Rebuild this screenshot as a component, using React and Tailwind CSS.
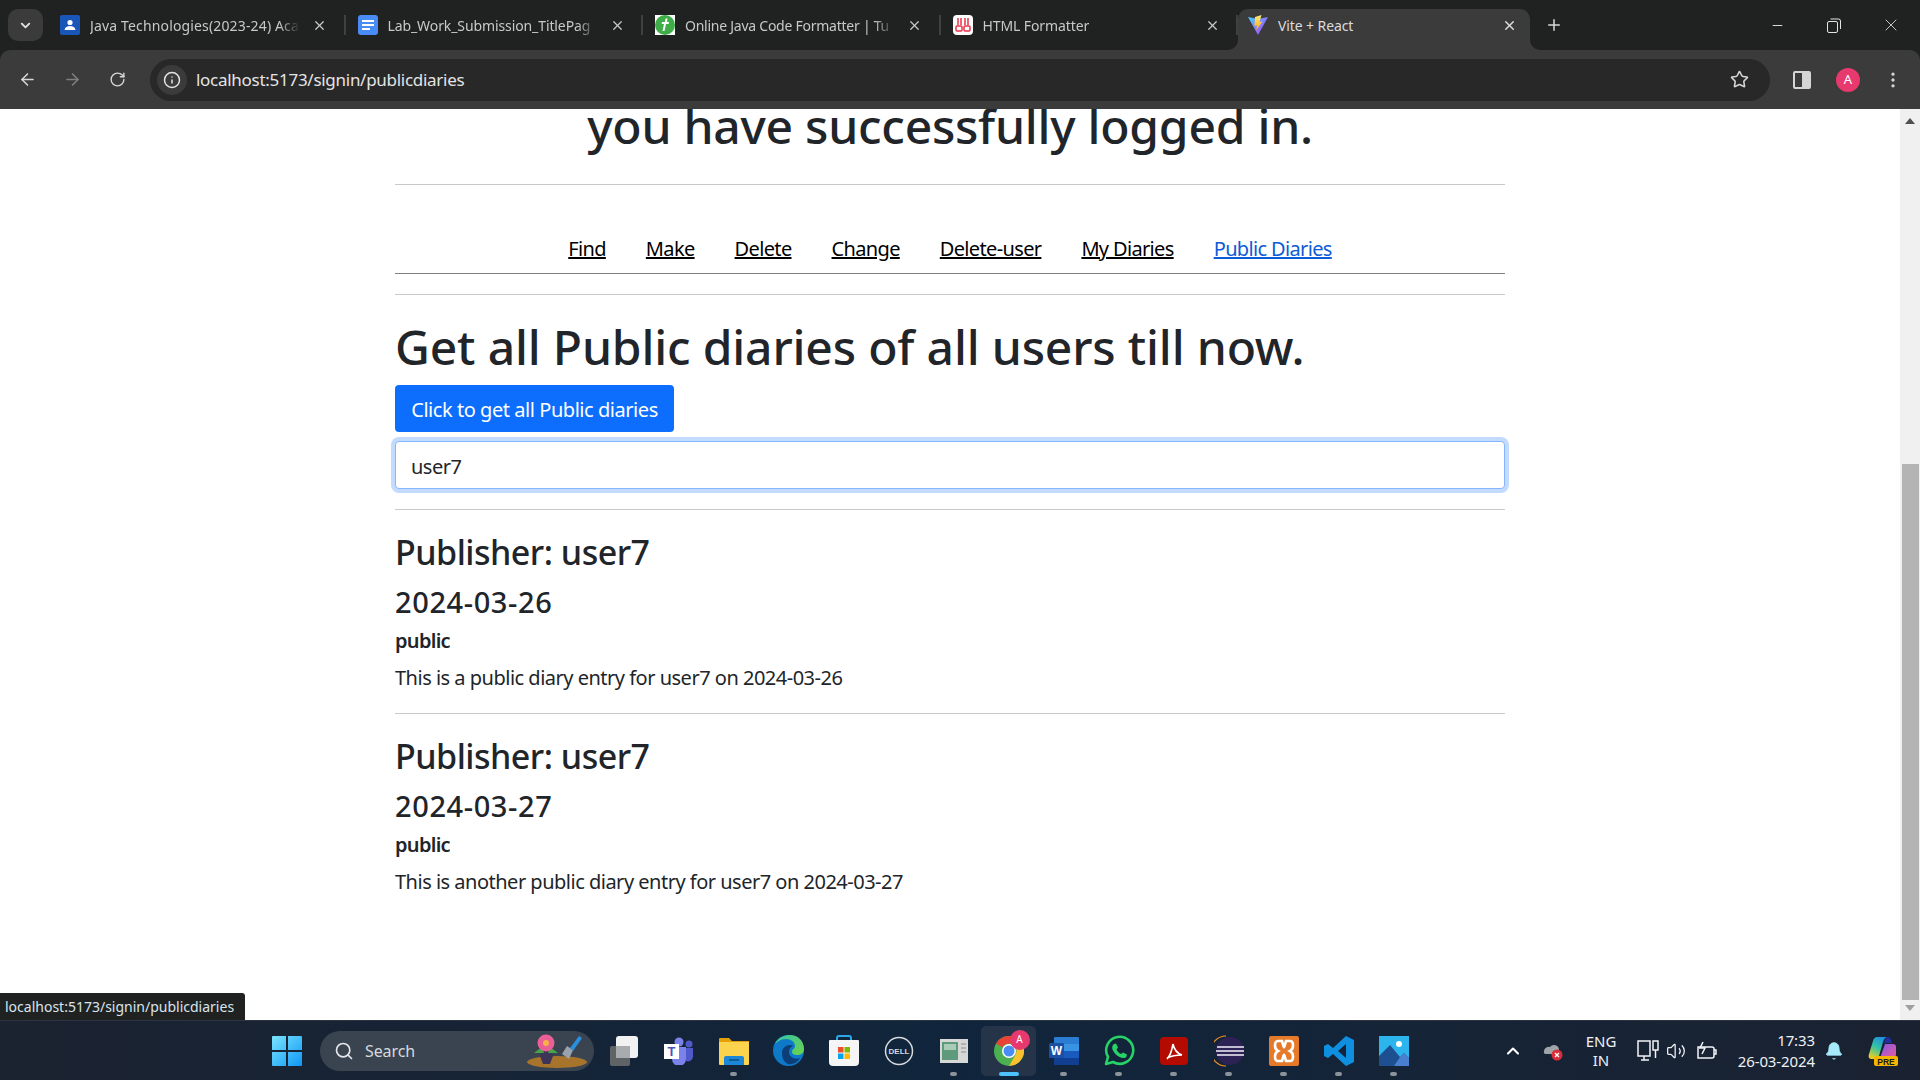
import { ArrowLeft, ArrowRight, RotateCw, Info, Star, X, Plus, Minus, ChevronDown, ChevronUp, EllipsisVertical, Search, Bell, Volume2 } from 'lucide-react';

const uiFont = 'font-["Noto_Sans",sans-serif]';
const navLinks = ['Find', 'Make', 'Delete', 'Change', 'Delete-user', 'My Diaries'];

const tabs = [
  { title: 'Java Technologies(2023-24) Aca', icon: <ClassroomIcon />, spacing: 'tracking-[0.15px]' },
  { title: 'Lab_Work_Submission_TitlePag', icon: <DocsIcon />, spacing: 'tracking-[-0.1px]' },
  { title: 'Online Java Code Formatter | Tu', icon: <TutorialsIcon />, spacing: 'tracking-[-0.25px]' },
  { title: 'HTML Formatter', icon: <HtmlIcon />, spacing: 'tracking-[-0.1px]' },
];

function ClassroomIcon() {
  return (
    <svg width="20" height="20" viewBox="0 0 20 20">
      <rect width="20" height="20" rx="2" fill="#1a56b8" />
      <circle cx="10" cy="7.5" r="2.6" fill="#fff" />
      <path d="M4.5 15c.6-3 2.6-4 5.5-4s4.900 1 5.500 4z" fill="#fff" />
    </svg>
  );
}

function DocsIcon() {
  return (
    <svg width="20" height="20" viewBox="0 0 20 20">
      <rect width="20" height="20" rx="3" fill="#4a8cf5" />
      <path d="M4 5h12v2H4zM4 9h12v2H4zM4 13h8v2H4z" fill="#fff" />
    </svg>
  );
}

function TutorialsIcon() {
  return (
    <svg width="20" height="20" viewBox="0 0 20 20">
      <rect width="20" height="20" fill="#fff" />
      <circle cx="10" cy="10" r="10" fill="#3fae49" />
      <path d="M7 7h7l-.4 2H11l-1.500 7H7.500L9 9H6.600zM10.500 3.500h2L12 7h-2z" fill="#fff" />
    </svg>
  );
}

function HtmlIcon() {
  return (
    <svg width="20" height="20" viewBox="0 0 20 20">
      <rect width="20" height="20" rx="4" fill="#fff" />
      <path d="M5 3v7M8 3v7M12 3v7M15 3v7" stroke="#e8344a" strokeWidth="1.500" />
      <rect x="3" y="11" width="6" height="5" rx="1" fill="none" stroke="#e8344a" strokeWidth="1.500" />
      <rect x="11" y="11" width="6" height="5" rx="1" fill="none" stroke="#e8344a" strokeWidth="1.500" />
    </svg>
  );
}

function ViteIcon() {
  return (
    <svg width="22" height="22" viewBox="0 0 22 22">
      <defs>
        <linearGradient id="vite-a" x1="0" y1="0" x2="1" y2="1">
          <stop offset="0" stopColor="#41d1ff" />
          <stop offset="1" stopColor="#bd34fe" />
        </linearGradient>
        <linearGradient id="vite-b" x1="0" y1="0" x2="0" y2="1">
          <stop offset="0" stopColor="#ffea83" />
          <stop offset="1" stopColor="#ffa800" />
        </linearGradient>
      </defs>
      <path d="M1 3l10 2 10-2-10 18z" fill="url(#vite-a)" />
      <path d="M14.500 1L8 3l-.5 9 2.500-.5-.8 5 6.300-9-3 .5z" fill="url(#vite-b)" />
    </svg>
  );
}

function Tab({ title, icon, spacing }) {
  return (
    <div className="relative flex h-[32px] w-[297.5px] shrink-0 items-center pl-[12px]">
      <span className="shrink-0">{icon}</span>
      <span className={`ml-[10px] w-[210px] overflow-hidden text-[14px] whitespace-nowrap text-[#c7c8c9] ${spacing} [mask-image:linear-gradient(to_right,black_90%,transparent)]`}>{title}</span>
      <X size={15} strokeWidth={2} className="absolute left-[264px] text-[#c7c8c9]" />
      <span className="absolute right-[0px] h-[20px] w-[2px] bg-[#3f4040]" />
    </div>
  );
}

function BrowserChrome() {
  return (
    <div className={`${uiFont} shrink-0 bg-[#202221]`}>
      <div className="flex h-[50px] items-start pl-[8px]">
        <div className="mt-[9px] flex h-[32px] w-[35px] shrink-0 items-center justify-center rounded-[10px] bg-[#3b3b3b]">
          <ChevronDown size={15} strokeWidth={3} className="text-[#e3e3e3]" />
        </div>
        <div className="ml-[5px] flex h-full items-start pt-[9px]">
          {tabs.map((t) => (
            <Tab key={t.title} title={t.title} icon={t.icon} spacing={t.spacing} />
          ))}
          <div className="relative flex h-[41px] w-[292px] shrink-0 items-start rounded-t-[10px] bg-[#3b3b3b] pl-[9px]">
            <span className="mt-[5px]"><ViteIcon /></span>
            <span className="ml-[9px] mt-[6px] text-[14px] text-[#dcdcdc] tracking-[-0.1px]">Vite + React</span>
            <X size={15} strokeWidth={2.500} className="absolute right-[13px] top-[9px] text-[#d8d8d8]" />
            <span className="absolute -left-[10px] bottom-0 h-[10px] w-[10px] bg-[#3b3b3b]">
              <span className="block h-full w-full rounded-br-[10px] bg-[#202221]" />
            </span>
            <span className="absolute -right-[10px] bottom-0 h-[10px] w-[10px] bg-[#3b3b3b]">
              <span className="block h-full w-full rounded-bl-[10px] bg-[#202221]" />
            </span>
          </div>
          <div className="flex h-[32px] w-[48px] items-center justify-center">
            <Plus size={18} strokeWidth={2} className="text-[#d8d8d8]" />
          </div>
        </div>
        <div className="ml-auto mt-[12px] flex items-center text-[#e4e4e4]">
          <div className="flex h-[26px] w-[55px] items-center justify-center"><Minus size={15} strokeWidth={1.500} /></div>
          <div className="flex h-[26px] w-[57px] items-center justify-center">
            <svg width="14" height="15" viewBox="0 0 14 15" fill="none" stroke="currentColor">
              <rect x="0.500" y="3.500" width="10" height="11" rx="1.500" />
              <path d="M3.500 1h8a2 2 0 0 1 2 2v8" />
            </svg>
          </div>
          <div className="flex h-[26px] w-[58px] items-center justify-center"><X size={20} strokeWidth={1} /></div>
        </div>
      </div>
      <div className="flex h-[59px] items-center rounded-t-[10px] bg-[#3b3b3b] pl-[18px] pr-[11px]">
        <ArrowLeft size={19} strokeWidth={2} className="text-[#d6d6d6]" />
        <ArrowRight size={19} strokeWidth={2} className="ml-[26px] text-[#7f7f7f]" />
        <RotateCw size={17} strokeWidth={2} className="ml-[27px] text-[#d6d6d6]" />
        <div className="ml-[24px] flex h-[42px] w-[1620px] items-center rounded-full bg-[#282828] pl-[7px]">
          <span className="flex h-[30px] w-[30px] items-center justify-center rounded-full bg-[#3b3b3b]">
            <Info size={18} strokeWidth={2} className="text-[#e4e4e4]" />
          </span>
          <span className="ml-[9px] text-[17px] text-[#e4e4e4] tracking-[-0.28px]">localhost:5173/signin/publicdiaries</span>
          <Star size={19} strokeWidth={2} className="ml-auto mr-[21px] text-[#d6d6d6]" />
        </div>
        <span className="ml-[23px] flex h-[18px] w-[18px] overflow-hidden rounded-[2px] border-2 border-[#d6d6d6]">
          <span className="w-1/2" />
          <span className="w-1/2 bg-[#d6d6d6]" />
        </span>
        <span className="ml-[25px] flex h-[24px] w-[24px] items-center justify-center rounded-full bg-[#e8396f] text-[13px] text-white">A</span>
        <EllipsisVertical size={20} strokeWidth={2} className="ml-[23px] text-[#d6d6d6]" />
      </div>
    </div>
  );
}

function Entry({ date, text }) {
  return (
    <div>
      <h2 className="mt-[21px] text-[34px] leading-[43px] font-medium text-[#212529] tracking-[-0.5px]">Publisher: user7</h2>
      <h3 className="mt-[10px] text-[29px] leading-[36px] font-medium text-[#212529] tracking-[0.6px]">{date}</h3>
      <p className="mt-[6px] text-[20px] leading-[30px] font-semibold text-[#212529] tracking-[-0.7px]">public</p>
      <p className="mt-[7px] text-[20px] leading-[30px] text-[#212529] tracking-[-0.5px]">{text}</p>
    </div>
  );
}

function Page() {
  return (
    <main className={`${uiFont} relative flex min-h-0 flex-1 overflow-hidden bg-white`}>
      <div className="min-w-0 flex-1">
        <div className="mx-auto w-[1110px]">
          <h1 className="-mt-[12px] text-center text-[48px] leading-[58px] font-medium text-[#212529] tracking-[-0.25px]">you have successfully logged in.</h1>
          <hr className="mt-[29px] border-[#c8c9ca]" />
          <nav className="mt-[49px] flex justify-center gap-[40px] border-b border-[#808080] pb-[9px] text-[20px] leading-[30px] tracking-[-0.65px]">
            {navLinks.map((l) => (
              <a key={l} href="#" className="text-black underline">{l}</a>
            ))}
            <a href="#" className="text-[#0d5bd7] underline">Public Diaries</a>
          </nav>
          <hr className="mt-[20px] border-[#c8c9ca]" />
          <h1 className="mt-[23px] text-[48px] leading-[58px] font-medium text-[#212529] tracking-[-0.17px]">Get all Public diaries of all users till now.</h1>
          <button type="button" className="mt-[9px] block h-[47px] w-[279px] rounded-[4px] bg-[#0d6efd] pt-[2px] text-center text-[20px] text-white tracking-[-0.45px]">Click to get all Public diaries</button>
          <input
            readOnly
            value="user7"
            className="mt-[9px] block h-[48px] w-full rounded-[4px] border border-[#86b7fe] bg-white px-[15px] pt-[2px] text-[20px] text-[#212529] tracking-[-0.5px] shadow-[0_0_0_4px_#c2dbfe] outline-none"
          />
          <hr className="mt-[20px] border-[#c8c9ca]" />
          <Entry date="2024-03-26" text="This is a public diary entry for user7 on 2024-03-26" />
          <hr className="mt-[20px] border-[#c8c9ca]" />
          <Entry date="2024-03-27" text="This is another public diary entry for user7 on 2024-03-27" />
        </div>
      </div>
      <div className="flex w-[20px] shrink-0 flex-col items-center bg-[#f0f0f0]">
        <span className="mt-[9px] h-0 w-0 border-x-[5px] border-b-[6px] border-x-transparent border-b-[#505050]" />
        <span className="mt-[340px] h-[536px] w-[17px] bg-[#b4b4b4]" />
        <span className="mt-[5px] h-0 w-0 border-x-[5px] border-t-[6px] border-x-transparent border-t-[#a0a0a0]" />
      </div>
      <div className="absolute bottom-0 left-0 flex h-[27px] w-[245px] items-center rounded-tr-[3px] bg-[#202221] pl-[5px] text-[14px] text-[#d8e4ee]">localhost:5173/signin/publicdiaries</div>
    </main>
  );
}

function WinLogo() {
  return (
    <svg width="30" height="30" viewBox="0 0 30 30">
      <defs>
        <linearGradient id="win" x1="0" y1="0" x2="1" y2="1">
          <stop offset="0" stopColor="#7ae4ff" />
          <stop offset="1" stopColor="#0f96f5" />
        </linearGradient>
      </defs>
      <path d="M0 1a1 1 0 0 1 1-1h13v14H0zM16 0h13a1 1 0 0 1 1 1v13H16zM0 16h14v14H1a1 1 0 0 1-1-1zM16 16h14v13a1 1 0 0 1-1 1H16z" fill="url(#win)" />
    </svg>
  );
}

function SearchArt() {
  return (
    <svg width="62" height="36" viewBox="0 0 62 36">
      <ellipse cx="31" cy="29" rx="30" ry="6" fill="#a8742c" />
      <path d="M16 16h9l2 7-3 8h-7l-3-8z" fill="#3d3457" />
      <path d="M8 20l8-6 2 6zM32 20l-8-6-2 6z" fill="#4aa446" />
      <circle cx="20" cy="10" r="8.500" fill="#ea5f95" />
      <circle cx="20" cy="10" r="3" fill="#f7b04a" />
      <path d="M36 21l5-8 6 4-4 9z" fill="#9aa3ac" />
      <path d="M44 15l9-12 3 2-9 13z" fill="#2b8fe0" />
    </svg>
  );
}

const TaskView = () => (
  <svg width="32" height="32" viewBox="0 0 32 32">
    <rect x="2" y="11" width="20" height="20" rx="2" fill="#5f6366" />
    <rect x="8" y="1" width="22" height="22" rx="3" fill="#f2f2f2" />
    <rect x="8" y="11" width="14" height="12" fill="#a9acae" />
  </svg>
);

const Teams = () => (
  <svg width="30" height="28" viewBox="0 0 30 28">
    <circle cx="15" cy="5" r="4.500" fill="#7b83eb" />
    <circle cx="25" cy="7" r="3.500" fill="#5059c9" />
    <path d="M19 11h10v9a5 5 0 0 1-7 4z" fill="#5059c9" />
    <path d="M8 10h14v12a7 7 0 0 1-14 0z" fill="#7b83eb" />
    <rect x="0" y="7" width="15" height="15" fill="#fff" />
    <text x="7.500" y="19" textAnchor="middle" fontSize="13" fontWeight="700" fontFamily="Liberation Sans, sans-serif" fill="#4b53bc">T</text>
  </svg>
);

const Folder = () => (
  <svg width="30" height="28" viewBox="0 0 30 28">
    <path d="M0 2a1 1 0 0 1 1-1h9l3 3h17v4H0z" fill="#e3a008" />
    <path d="M0 5h30v22a1 1 0 0 1-1 1H1a1 1 0 0 1-1-1z" fill="#fcd34d" />
    <path d="M5 28v-7a2 2 0 0 1 2-2h16a2 2 0 0 1 2 2v7z" fill="#1b87d6" />
    <path d="M10 23h10" stroke="#0b4f8a" strokeWidth="1.500" />
  </svg>
);

const Edge = () => (
  <svg width="31" height="31" viewBox="0 0 31 31">
    <defs>
      <linearGradient id="edge" x1="0" y1="0" x2="1" y2="1">
        <stop offset="0" stopColor="#2fc5a6" />
        <stop offset="1" stopColor="#6ed34a" />
      </linearGradient>
    </defs>
    <circle cx="15.500" cy="15.500" r="15.500" fill="#0e78c9" />
    <path d="M2 9C5 2 12 0 17 0c8 0 14 6 14 14 0 4-3 6-7 6-3 0-5-1-5-3 0-3 3-3 3-6 0-4-4-7-9-7-5 0-9 3-11 5z" fill="url(#edge)" />
    <path d="M9 18c0-5 4-8 8-8 2 0 3 1 3 1-3 1-4 3-4 6 0 5 5 8 11 6-3 5-8 7-12 6-4-2-6-6-6-11z" fill="#0c3f78" />
  </svg>
);

const Store = () => (
  <svg width="30" height="31" viewBox="0 0 30 31">
    <path d="M8 6V3a2 2 0 0 1 2-2h10a2 2 0 0 1 2 2v3" fill="none" stroke="#2aa7e8" strokeWidth="2" />
    <path d="M1 5h28a1 1 0 0 1 1 1v21a4 4 0 0 1-4 4H4a4 4 0 0 1-4-4V6a1 1 0 0 1 1-1z" fill="#f5f5f5" />
    <rect x="9" y="12" width="5.500" height="5.500" fill="#ea4f2a" />
    <rect x="15.500" y="12" width="5.500" height="5.500" fill="#7fba00" />
    <rect x="9" y="18.500" width="5.500" height="5.500" fill="#00a4ef" />
    <rect x="15.500" y="18.500" width="5.500" height="5.500" fill="#ffb900" />
  </svg>
);

const Dell = () => (
  <svg width="30" height="30" viewBox="0 0 30 30">
    <circle cx="15" cy="15" r="13.500" fill="none" stroke="#d7d9db" strokeWidth="1.500" />
    <text x="15" y="18" textAnchor="middle" fontSize="8" fontWeight="700" fontFamily="Liberation Sans, sans-serif" fill="#d7d9db">DELL</text>
  </svg>
);

const ScreenApp = () => (
  <svg width="28" height="24" viewBox="0 0 28 24">
    <rect width="28" height="24" fill="#d6d8d8" />
    <rect x="2" y="3" width="16" height="18" fill="#5f9a7d" />
    <rect x="4" y="5" width="12" height="6" fill="#a9cbb8" />
    <path d="M21 5h5M21 9h5M21 13h5" stroke="#8a8d8f" />
  </svg>
);

const Chrome = () => (
  <span className="relative block h-[30px] w-[30px]">
    <svg width="30" height="30" viewBox="0 0 30 30">
      <circle cx="15" cy="15" r="15" fill="#4caf50" />
      <path d="M15 0a15 15 0 0 1 13 7.500H15a7.500 7.500 0 0 0-6.500 3.750L2 7.500A15 15 0 0 1 15 0z" fill="#ea4335" />
      <path d="M28 7.500A15 15 0 0 1 15 30l6.500-11.250a7.500 7.500 0 0 0 0-7.500z" fill="#fbc02d" />
      <circle cx="15" cy="15" r="7" fill="#fff" />
      <circle cx="15" cy="15" r="5.500" fill="#4a8cf5" />
    </svg>
    <span className="absolute -top-[6px] -right-[6px] flex h-[20px] w-[20px] items-center justify-center rounded-full bg-[#e8396f] text-[10px] text-white">A</span>
  </span>
);

const Word = () => (
  <svg width="30" height="28" viewBox="0 0 30 28">
    <rect x="5" y="0" width="25" height="28" rx="1" fill="#2b7cd3" />
    <rect x="5" y="7" width="25" height="7" fill="#41a5ee" opacity="0.600" />
    <rect x="5" y="14" width="25" height="7" fill="#185abd" />
    <rect x="5" y="21" width="25" height="7" fill="#103f91" />
    <rect x="0" y="6" width="15" height="15" rx="1" fill="#1a4fa3" />
    <text x="7.500" y="18" textAnchor="middle" fontSize="12" fontWeight="700" fontFamily="Liberation Sans, sans-serif" fill="#fff">W</text>
  </svg>
);

const Whatsapp = () => (
  <svg width="32" height="32" viewBox="0 0 32 32">
    <path d="M3 29l2-7A13.500 13.500 0 1 1 10 27z" fill="none" stroke="#27d366" strokeWidth="2.600" strokeLinejoin="round" />
    <path d="M11 9l2-.5 2 4-1.500 2c1 2 2.500 3.500 4.500 4.500l2-1.500 4 2-.5 2c-1 2-4 2-7 .5s-5-3.500-6.500-6.500-.5-5.500 1-6.500z" fill="#27d366" />
  </svg>
);

const Acrobat = () => (
  <svg width="28" height="28" viewBox="0 0 28 28">
    <rect width="28" height="28" rx="4" fill="#b30b00" />
    <path d="M7 22c3-3 5-9 6-15M13 7c1 5 3 9 9 11M7 21c4-2 9-3 15-3" fill="none" stroke="#fff" strokeWidth="1.600" />
  </svg>
);

const Eclipse = () => (
  <svg width="30" height="32" viewBox="0 0 30 32">
    <circle cx="16" cy="16" r="14" fill="#2c2255" />
    <path d="M3 12h27M2 16h28M3 20h27" stroke="#f2f0f8" strokeWidth="1.600" />
    <path d="M12 1a15 15 0 0 0 0 30" fill="none" stroke="#f7941e" strokeWidth="1.200" />
  </svg>
);

const Xampp = () => (
  <svg width="30" height="30" viewBox="0 0 30 30">
    <rect width="30" height="30" rx="2" fill="#e57b2a" />
    <path d="M9 5h4c1 3 1 5 2 6 1-1 1-3 2-6h4c4 0 4 8 0 10 4 2 4 10 0 10h-4c-1-3-1-5-2-6-1 1-1 3-2 6H9c-4 0-4-8 0-10-4-2-4-10 0-10z" fill="none" stroke="#fff" strokeWidth="2.600" />
  </svg>
);

const VsCode = () => (
  <svg width="30" height="30" viewBox="0 0 30 30">
    <path d="M22 0l8 4v22l-8 4-13-12-5 4-4-2V10l4-2 5 4zM22 8l-8 7 8 7z" fill="#0f8fe0" fillRule="evenodd" />
  </svg>
);

const Photos = () => (
  <svg width="30" height="30" viewBox="0 0 30 30">
    <rect width="30" height="30" fill="#2bb5ec" />
    <circle cx="20" cy="8" r="3" fill="#fff" />
    <path d="M0 20L11 9l10 12 4-4 5 5v8H0z" fill="#1d4f91" />
    <path d="M21 21l4-4 5 5v8H15z" fill="#4a7fd0" />
  </svg>
);

const Copilot = () => (
  <svg width="30" height="30" viewBox="0 0 30 30">
    <defs>
      <linearGradient id="cop-l" x1="0.700" y1="0" x2="0.200" y2="1">
        <stop offset="0" stopColor="#1f8ee8" />
        <stop offset="0.500" stopColor="#35c4a0" />
        <stop offset="1" stopColor="#f0d020" />
      </linearGradient>
      <linearGradient id="cop-r" x1="0" y1="0" x2="1" y2="1">
        <stop offset="0" stopColor="#7a5ae8" />
        <stop offset="1" stopColor="#f05a9c" />
      </linearGradient>
    </defs>
    <path d="M9 1h11c-3 0-4 2-5 5l-4 14c-.5 2-2 3-4 3H4c-3 0-4-2-3-5L5 5c1-3 2-4 4-4z" fill="url(#cop-l)" />
    <path d="M20 1c2 0 3 2 4 6h-8c1-4 2-6 4-6z" fill="#2030a0" />
    <path d="M17 8h8c2 0 3 1 3 3v7c0 2-1 4-3 4H12z" fill="url(#cop-r)" />
    <rect x="6" y="20" width="24" height="10" rx="2" fill="#f7b500" />
    <text x="18" y="28.500" textAnchor="middle" fontSize="8.500" fontWeight="700" fontFamily="Liberation Sans, sans-serif" fill="#1a1a1a">PRE</text>
  </svg>
);

const appIcons = [
  { key: 'task', icon: <TaskView /> },
  { key: 'teams', icon: <Teams /> },
  { key: 'folder', icon: <Folder />, dot: true },
  { key: 'edge', icon: <Edge /> },
  { key: 'store', icon: <Store /> },
  { key: 'dell', icon: <Dell /> },
  { key: 'screen', icon: <ScreenApp />, dot: true },
  { key: 'chrome', icon: <Chrome />, active: true },
  { key: 'word', icon: <Word />, dot: true },
  { key: 'whatsapp', icon: <Whatsapp />, dot: true },
  { key: 'acrobat', icon: <Acrobat />, dot: true },
  { key: 'eclipse', icon: <Eclipse />, dot: true },
  { key: 'xampp', icon: <Xampp />, dot: true },
  { key: 'vscode', icon: <VsCode />, dot: true },
  { key: 'photos', icon: <Photos />, dot: true },
];

function Taskbar() {
  return (
    <footer className={`${uiFont} flex h-[60px] shrink-0 items-center border-t border-[#2c3440] bg-gradient-to-r from-[#1b2230] via-[#10253c] to-[#1a2231] text-[#eef1f4]`}>
      <div className="ml-[272px] flex w-[30px] justify-center"><WinLogo /></div>
      <div className="ml-[18px] flex h-[40px] w-[274px] items-center rounded-full bg-[#3a4451] pl-[14px] pr-[6px]">
        <Search size={20} strokeWidth={2} className="text-[#e4e6e8]" />
        <span className="ml-[11px] text-[16px] text-[#d6d9dc] tracking-[-0.1px]">Search</span>
        <span className="ml-auto"><SearchArt /></span>
      </div>
      <div className="ml-[2px] flex items-center">
        {appIcons.map((a) => (
          <div key={a.key} className={`relative flex h-[50px] w-[55px] items-center justify-center rounded-[5px] ${a.active ? 'bg-[#26344a]' : ''}`}>
            {a.icon}
            {a.dot && <span className="absolute bottom-0 h-[4px] w-[7px] rounded-full bg-[#8b929a]" />}
            {a.active && <span className="absolute bottom-0 h-[4px] w-[20px] rounded-full bg-[#4cc2ff]" />}
          </div>
        ))}
      </div>
      <ChevronUp size={20} strokeWidth={2.500} className="ml-[82px] text-white" />
      <svg width="22" height="20" viewBox="0 0 22 20" className="ml-[19px]">
        <path d="M2 12a5 5 0 0 1 6-6 5 5 0 0 1 9 3v4H3z" fill="#9fa4a9" />
        <circle cx="15" cy="14" r="5.500" fill="#d92d3a" />
        <path d="M13 12l4 4M17 12l-4 4" stroke="#fff" strokeWidth="1.300" />
      </svg>
      <div className="ml-[18px] w-[38px] text-center text-[15px] leading-[19px]">ENG<br />IN</div>
      <svg width="24" height="24" viewBox="0 0 24 24" fill="none" stroke="#f2f4f6" strokeWidth="1.500" className="ml-[16px]">
        <path d="M14 2H2v15h12zM5 21h8M8 17v4" />
        <path d="M17 2h5v9h-5zM19.500 11v8" />
      </svg>
      <Volume2 size={20} strokeWidth={1.500} className="ml-[6px] text-[#f2f4f6]" />
      <svg width="22" height="20" viewBox="0 0 22 20" fill="none" stroke="#f2f4f6" strokeWidth="1.500" className="ml-[9px]">
        <path d="M3 6h14a2 2 0 0 1 2 2v7a2 2 0 0 1-2 2H3z" />
        <path d="M19 9h2v4h-2" />
        <path d="M8 1L5 7h5l-3 6" />
      </svg>
      <div className="ml-[18px] w-[80px] text-right text-[15px] leading-[21px] tracking-[-0.1px]">17:33<br />26-03-2024</div>
      <Bell size={20} fill="#a6eafc" strokeWidth={1} className="ml-[9px] text-[#a6eafc]" />
      <span className="ml-[24px]"><Copilot /></span>
    </footer>
  );
}

export default function App() {
  return (
    <div className="flex h-screen w-full flex-col overflow-hidden">
      <BrowserChrome />
      <Page />
      <Taskbar />
    </div>
  );
}
